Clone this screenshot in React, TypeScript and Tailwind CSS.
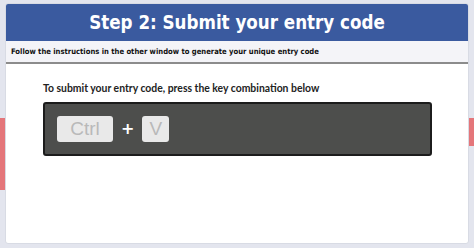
import React from 'react';

function Key({ label, wide }: { label: string; wide?: boolean }) {
  return (
    <div
      className={`flex h-[26px] items-center justify-center rounded-[3px] bg-[#e9e9e9] text-[19px] leading-none text-[#b9b9b9] ${
        wide ? 'w-[56px]' : 'w-[27px]'
      }`}
      style={{ fontFamily: '"Liberation Sans", Arial, sans-serif' }}
    >
      {label}
    </div>
  );
}

export default function App() {
  return (
    <div className="relative h-[248px] w-[474px] overflow-hidden bg-[#e3e5ee]">
      {/* page behind the dialog */}
      <div className="absolute left-0 top-[118px] h-[72px] w-[8px] bg-[#e4767a]" />
      <div className="absolute right-0 top-[118px] h-[28px] w-[8px] bg-[#e4767a]" />

      <div className="relative mx-[5px] mt-[3px] h-[241px] overflow-hidden rounded-[3px] border border-[#d8dbe4] bg-white">
        <div
          className="flex h-[37px] items-center justify-center bg-[#3a5a9f] text-[18.6px] font-bold text-white"
          style={{ fontFamily: '"DejaVu Sans Condensed", "DejaVu Sans", Verdana, sans-serif', fontStretch: 'condensed' }}
        >
          Step 2: Submit your entry code
        </div>
        <div
          className="flex h-[23px] items-center border-b-2 border-[#8c8c8c] bg-[#f4f4f8] pl-[5px] text-[7.6px] font-bold text-[#111]"
          style={{ fontFamily: '"DejaVu Sans Condensed", "DejaVu Sans", Verdana, sans-serif', fontStretch: 'condensed' }}
        >
          Follow the instructions in the other window to generate your unique entry code
        </div>

        <div className="pl-[37px] pr-[36px] pt-[17px]">
          <p
            className="text-[10.4px] font-bold text-[#222]"
            style={{ fontFamily: 'Lato, "Open Sans", sans-serif' }}
          >
            To submit your entry code, press the key combination below
          </p>
          <div className="mt-[5px] flex h-[54px] items-center gap-[8px] rounded-[3px] border-2 border-[#1c1c1c] bg-[#4d4e4c] pl-[12px]">
            <Key label="Ctrl" wide />
            <span
              className="text-[16px] font-bold text-white"
              style={{ fontFamily: '"DejaVu Sans", Verdana, sans-serif' }}
            >
              +
            </span>
            <Key label="V" />
          </div>
        </div>
      </div>
    </div>
  );
}
